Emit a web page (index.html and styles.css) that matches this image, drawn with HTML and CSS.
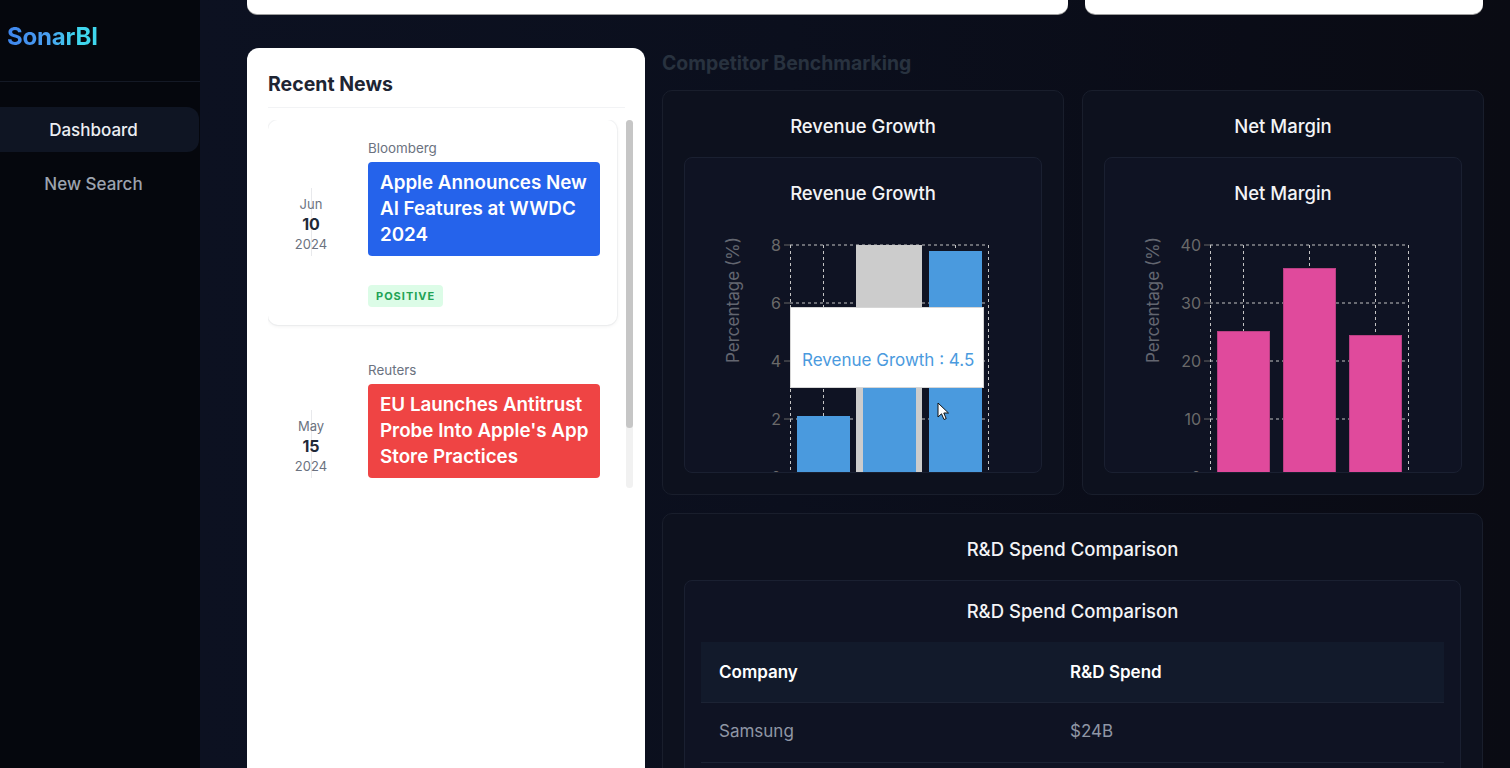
FILE: index.html
```html
<!DOCTYPE html>
<html lang="en">
<head>
<meta charset="utf-8">
<title>SonarBI Dashboard</title>
<link rel="stylesheet" href="styles.css">
</head>
<body>
<div class="app">
  <aside class="sidebar">
    <div class="brand"><span class="logo">SonarBI</span></div>
    <nav class="nav">
      <a class="nav-item active">Dashboard</a>
      <a class="nav-item">New Search</a>
    </nav>
  </aside>

  <main class="main">
    <div class="row-top">
      <div class="top-card top-wide"></div>
      <div class="top-card top-narrow"></div>
    </div>

    <div class="row-content">
      <section class="news-card">
        <h2 class="news-title">Recent News</h2>
        <div class="news-scroll">
          <div class="news-list">
            <article class="news-item raised">
              <div class="date"><span class="mon">Jun</span><span class="day">10</span><span class="yr">2024</span></div>
              <div class="news-body">
                <div class="source">Bloomberg</div>
                <div class="headline blue">Apple Announces New AI Features at WWDC 2024</div>
                <span class="badge pos">Positive</span>
              </div>
            </article>
            <article class="news-item">
              <div class="date"><span class="mon">May</span><span class="day">15</span><span class="yr">2024</span></div>
              <div class="news-body">
                <div class="source">Reuters</div>
                <div class="headline red">EU Launches Antitrust Probe Into Apple's App Store Practices</div>
                <span class="badge neg">Negative</span>
              </div>
            </article>
          </div>
          <div class="scrollbar"><div class="scroll-thumb"></div></div>
        </div>
      </section>

      <section class="bench">
        <h2 class="bench-title">Competitor Benchmarking</h2>
        <div class="chart-grid">
          <div class="panel">
            <h3 class="panel-title">Revenue Growth</h3>
            <div class="inner chart-inner">
              <h4 class="inner-title">Revenue Growth</h4>
              <svg class="chart" width="356" height="270" viewBox="0 0 356 270">
                <g class="grid">
                  <line x1="105" y1="20" x2="303" y2="20"/>
                  <line x1="105" y1="78" x2="303" y2="78"/>
                  <line x1="105" y1="136" x2="303" y2="136"/>
                  <line x1="105" y1="194" x2="303" y2="194"/>
                  <line x1="105.5" y1="20" x2="105.5" y2="252"/>
                  <line x1="138.5" y1="20" x2="138.5" y2="252"/>
                  <line x1="204.5" y1="20" x2="204.5" y2="252"/>
                  <line x1="270.5" y1="20" x2="270.5" y2="252"/>
                  <line x1="303.5" y1="20" x2="303.5" y2="252"/>
                </g>
                <rect class="hover" x="171" y="20" width="66" height="232"/>
                <rect class="bar-blue" x="112" y="191" width="53" height="61"/>
                <rect class="bar-blue" x="178" y="121.5" width="53" height="130.5"/>
                <rect class="bar-blue" x="244" y="26" width="53" height="226"/>
                <g class="ticks">
                  <line x1="99" y1="20" x2="105" y2="20"/>
                  <line x1="99" y1="78" x2="105" y2="78"/>
                  <line x1="99" y1="136" x2="105" y2="136"/>
                  <line x1="99" y1="194" x2="105" y2="194"/>
                  <line x1="99" y1="252" x2="105" y2="252"/>
                </g>
                <g class="tick-text">
                  <text x="96" y="26">8</text>
                  <text x="96" y="84">6</text>
                  <text x="96" y="142">4</text>
                  <text x="96" y="200">2</text>
                  <text x="96" y="258">0</text>
                </g>
                <text class="axis-label" transform="translate(54 75) rotate(-90)">Percentage (%)</text>
              </svg>
              <div class="tooltip">Revenue Growth : 4.5</div>
              <svg class="cursor" width="13" height="19" viewBox="0 0 13 19">
                <path d="M1 1 L1 15 L4.5 11.8 L7 17.5 L9.2 16.6 L6.8 11 L11.5 11 Z" fill="#fff" stroke="#111" stroke-width="1" stroke-linejoin="round"/>
              </svg>
            </div>
          </div>

          <div class="panel">
            <h3 class="panel-title">Net Margin</h3>
            <div class="inner chart-inner">
              <h4 class="inner-title">Net Margin</h4>
              <svg class="chart" width="356" height="270" viewBox="0 0 356 270">
                <g class="grid">
                  <line x1="105" y1="20" x2="303" y2="20"/>
                  <line x1="105" y1="78" x2="303" y2="78"/>
                  <line x1="105" y1="136" x2="303" y2="136"/>
                  <line x1="105" y1="194" x2="303" y2="194"/>
                  <line x1="105.5" y1="20" x2="105.5" y2="252"/>
                  <line x1="138.5" y1="20" x2="138.5" y2="252"/>
                  <line x1="204.5" y1="20" x2="204.5" y2="252"/>
                  <line x1="270.5" y1="20" x2="270.5" y2="252"/>
                  <line x1="303.5" y1="20" x2="303.5" y2="252"/>
                </g>
                <rect class="bar-pink" x="112.5" y="106.5" width="52" height="146"/>
                <rect class="bar-pink" x="178.5" y="43.5" width="52" height="209"/>
                <rect class="bar-pink" x="244.5" y="110.5" width="52" height="142"/>
                <g class="ticks">
                  <line x1="99" y1="20" x2="105" y2="20"/>
                  <line x1="99" y1="78" x2="105" y2="78"/>
                  <line x1="99" y1="136" x2="105" y2="136"/>
                  <line x1="99" y1="194" x2="105" y2="194"/>
                  <line x1="99" y1="252" x2="105" y2="252"/>
                </g>
                <g class="tick-text">
                  <text x="96" y="26">40</text>
                  <text x="96" y="84">30</text>
                  <text x="96" y="142">20</text>
                  <text x="96" y="200">10</text>
                  <text x="96" y="258">0</text>
                </g>
                <text class="axis-label" transform="translate(54 75) rotate(-90)">Percentage (%)</text>
              </svg>
            </div>
          </div>
        </div>

        <div class="panel panel-table">
          <h3 class="panel-title">R&amp;D Spend Comparison</h3>
          <div class="inner table-inner">
            <h4 class="inner-title table-title">R&amp;D Spend Comparison</h4>
            <table class="rd-table">
              <colgroup><col class="col-company"><col></colgroup>
              <thead>
                <tr><th>Company</th><th>R&amp;D Spend</th></tr>
              </thead>
              <tbody>
                <tr><td>Samsung</td><td>$24B</td></tr>
                <tr><td>Apple</td><td>$30B</td></tr>
                <tr><td>Google</td><td>$45B</td></tr>
              </tbody>
            </table>
          </div>
        </div>
      </section>
    </div>
  </main>
</div>
</body>
</html>
```

FILE: styles.css
```css
* {
  box-sizing: border-box;
  margin: 0;
  padding: 0;
}

html,
body {
  height: 100%;
  overflow: hidden;
}

body {
  font-family: Inter, "Noto Sans", "Liberation Sans", sans-serif;
  background: #0b0f1c;
  color: #e5e7eb;
}

.app {
  display: flex;
  height: 100vh;
  overflow: hidden;
}

/* Sidebar */
.sidebar {
  width: 200px;
  flex: none;
  background: #05070d;
}

.brand {
  height: 82px;
  padding: 23px 7px 0;
  border-bottom: 1px solid #141925;
}

.logo {
  display: inline-block;
  font-size: 24px;
  line-height: 28px;
  font-weight: 700;
  letter-spacing: -0.2px;
  background: linear-gradient(90deg, #3f86ee 0%, #4a9ff0 45%, #3fd6ee 75%, #3fd6ee 100%);
  -webkit-background-clip: text;
  background-clip: text;
  color: transparent;
}

.nav {
  padding-top: 25px;
  display: flex;
  flex-direction: column;
  gap: 9px;
}

.nav-item {
  display: block;
  width: 199px;
  height: 45px;
  line-height: 46px;
  padding-right: 12px;
  text-align: center;
  font-size: 17px;
  font-weight: 500;
  color: #9ca3af;
  border-radius: 0 12px 12px 0;
}

.nav-item.active {
  background: #0f1523;
  color: #eceef2;
}

/* Main */
.main {
  flex: 1;
  padding: 0 27px 0 47px;
  background: linear-gradient(90deg, #0c1121 0%, #0b0f1d 45%, #0a0c17 80%, #0a0b13 100%);
  overflow: hidden;
}

.row-top {
  display: flex;
  gap: 17px;
  margin-top: -86px;
}

.top-card {
  height: 100px;
  background: #fff;
  border-radius: 10px;
  box-shadow: 0 1px 0 #9d9d9d;
}

.top-wide {
  flex: 1;
}

.top-narrow {
  width: 398px;
  flex: none;
}

.row-content {
  display: flex;
  gap: 17px;
  margin-top: 34px;
  align-items: flex-start;
}

/* News card */
.news-card {
  width: 398px;
  flex: none;
  min-height: 760px;
  background: #fff;
  border-radius: 12px;
  padding: 21px 20px 0 21px;
}

.news-title {
  font-size: 19.5px;
  line-height: 28px;
  font-weight: 700;
  color: #1e2533;
  padding: 1px 0 9px;
  border-bottom: 1px solid #f2f3f5;
}

.news-scroll {
  display: flex;
  margin-top: 12px;
  margin-right: -8px;
  height: 370px;
}

.news-list {
  flex: 1;
  min-width: 0;
  overflow: hidden;
  padding-right: 8px;
  display: flex;
  flex-direction: column;
  gap: 17px;
}

.scrollbar {
  width: 7px;
  height: 368px;
  margin-left: 1px;
  background: #f1f1f1;
  border-radius: 4px;
  flex: none;
}

.scroll-thumb {
  height: 308px;
  background: #c6c6c6;
  border-radius: 4px;
}

.news-item {
  display: flex;
  align-items: center;
  gap: 34px;
  flex: none;
  padding: 20px 17px 18px 20px;
  border-radius: 10px;
}

.news-item.raised {
  box-shadow: 0 1px 4px rgba(0, 0, 0, 0.07), 0 0 0 1px #f6f7f8;
}

.date {
  width: 46px;
  flex: none;
  display: flex;
  flex-direction: column;
  align-items: center;
  position: relative;
}

.date::before {
  content: "";
  position: absolute;
  left: 50%;
  top: -6px;
  bottom: -2px;
  width: 1px;
  background: #e8e9ec;
}

.date span {
  position: relative;
  line-height: 20px;
}

.mon,
.yr {
  font-size: 13px;
  color: #6b7280;
}

.day {
  font-size: 16px;
  font-weight: 700;
  color: #1f2937;
}

.news-body {
  width: 232px;
  flex: none;
}

.source {
  font-size: 13.4px;
  line-height: 16px;
  color: #6b7280;
  margin-bottom: 6px;
}

.headline {
  color: #fff;
  font-size: 18.8px;
  line-height: 26px;
  font-weight: 600;
  padding: 8px 8px 8px 12px;
  border-radius: 4px;
}

.headline.blue {
  background: #2563eb;
}

.headline.red {
  background: #ef4444;
}

.badge {
  display: inline-block;
  margin-top: 29px;
  height: 22px;
  line-height: 22px;
  padding: 0 8px;
  font-size: 11px;
  font-weight: 700;
  letter-spacing: 1px;
  text-transform: uppercase;
  border-radius: 4px;
}

.badge.pos {
  background: #dcfce7;
  color: #22a355;
}

.badge.neg {
  background: #fee2e2;
  color: #dc2626;
}

/* Benchmarking */
.bench {
  flex: 1;
  min-width: 0;
}

.bench-title {
  font-size: 19.4px;
  line-height: 28px;
  font-weight: 700;
  color: #28323f;
  margin-bottom: 14px;
  padding-top: 1px;
  height: 28px;
}

.chart-grid {
  display: grid;
  grid-template-columns: 1fr 1fr;
  gap: 18px;
}

.panel {
  background: #0d111e;
  border: 1px solid #191e2c;
  border-radius: 10px;
  padding: 21px;
}

.panel-title,
.inner-title {
  font-size: 18.5px;
  line-height: 28px;
  font-weight: 500;
  color: #f3f4f6;
  text-align: center;
}

.panel-title {
  margin-bottom: 17px;
}

.inner {
  background: #0f1323;
  border: 1px solid #1a2031;
  border-radius: 8px;
}

.chart-inner {
  position: relative;
  height: 316px;
  overflow: hidden;
  padding-top: 21px;
}

.chart-inner .inner-title {
  margin-bottom: 18px;
}

.chart {
  display: block;
}

.grid line {
  stroke: #c4c4c4;
  stroke-width: 1;
  stroke-dasharray: 3 3;
}

.ticks line {
  stroke: #666;
  stroke-width: 1;
}

.tick-text text {
  font-family: Inter, "Noto Sans", sans-serif;
  font-size: 16px;
  fill: #6a6a6a;
  text-anchor: end;
}

.axis-label {
  font-family: Inter, "Noto Sans", sans-serif;
  font-size: 17px;
  fill: #636670;
  text-anchor: middle;
}

.hover {
  fill: #cccccc;
}

.bar-blue {
  fill: #4a9ade;
}

.bar-pink {
  fill: #e04a9c;
  stroke: #b93f83;
  stroke-width: 1;
}

.tooltip {
  position: absolute;
  left: 105px;
  top: 149px;
  width: 194px;
  height: 81px;
  background: #fff;
  border: 1px solid #d6d6d6;
  padding: 41px 0 0 11px;
  font-size: 17px;
  line-height: 22px;
  color: #4a9ade;
  white-space: nowrap;
}

.cursor {
  position: absolute;
  left: 252px;
  top: 244px;
}

/* Table panel */
.panel-table {
  margin-top: 18px;
  min-height: 300px;
}

.table-inner {
  padding: 16px 16px 0;
  min-height: 260px;
}

.table-title {
  margin-bottom: 17px;
}

.rd-table {
  width: 100%;
  border-collapse: collapse;
  table-layout: fixed;
}

.col-company {
  width: 351px;
}

.rd-table th,
.rd-table td {
  height: 60px;
  padding: 0 18px;
  text-align: left;
  font-size: 17px;
  border-bottom: 1px solid #1c2334;
}

.rd-table th {
  background: #121a2b;
  color: #fff;
  font-weight: 600;
}

.rd-table td {
  color: #8f96a5;
  font-weight: 400;
  padding-bottom: 2px;
}
```
